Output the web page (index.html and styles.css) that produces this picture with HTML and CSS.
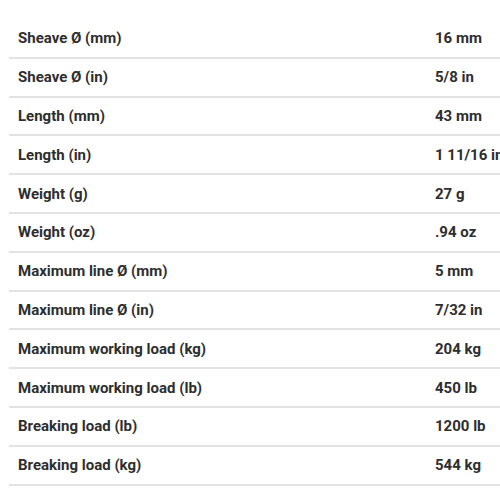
FILE: index.html
```html
<!DOCTYPE html>
<html>
<head>
<meta charset="utf-8">
<link rel="stylesheet" href="styles.css">
</head>
<body>
<table class="specs">
<tbody>
<tr><td class="label">Sheave Ø (mm)</td><td class="value">16 mm</td></tr>
<tr><td class="label">Sheave Ø (in)</td><td class="value">5/8 in</td></tr>
<tr><td class="label">Length (mm)</td><td class="value">43 mm</td></tr>
<tr><td class="label">Length (in)</td><td class="value">1 11/16 in</td></tr>
<tr><td class="label">Weight (g)</td><td class="value">27 g</td></tr>
<tr><td class="label">Weight (oz)</td><td class="value">.94 oz</td></tr>
<tr><td class="label">Maximum line Ø (mm)</td><td class="value">5 mm</td></tr>
<tr><td class="label">Maximum line Ø (in)</td><td class="value">7/32 in</td></tr>
<tr><td class="label">Maximum working load (kg)</td><td class="value">204 kg</td></tr>
<tr><td class="label">Maximum working load (lb)</td><td class="value">450 lb</td></tr>
<tr><td class="label">Breaking load (lb)</td><td class="value">1200 lb</td></tr>
<tr><td class="label">Breaking load (kg)</td><td class="value">544 kg</td></tr>
</tbody>
</table>
</body>
</html>
```
FILE: styles.css
```css
html, body {
  margin: 0;
  padding: 0;
  background: #ffffff;
  overflow: hidden;
}
body {
  padding: 20px 0 0 9px;
  font-family: Roboto, "Liberation Sans", sans-serif;
  color: #2e2e2e;
}
.specs {
  border-collapse: collapse;
  width: 560px;
  table-layout: fixed;
}
.specs td {
  height: 36.8px;
  padding: 0 0 0 9px;
  border-bottom: 2px solid #e3e3e3;
  font-size: 15px;
  font-weight: 700;
  white-space: nowrap;
  vertical-align: middle;
}
.specs .label {
  width: 408px;
}
```
